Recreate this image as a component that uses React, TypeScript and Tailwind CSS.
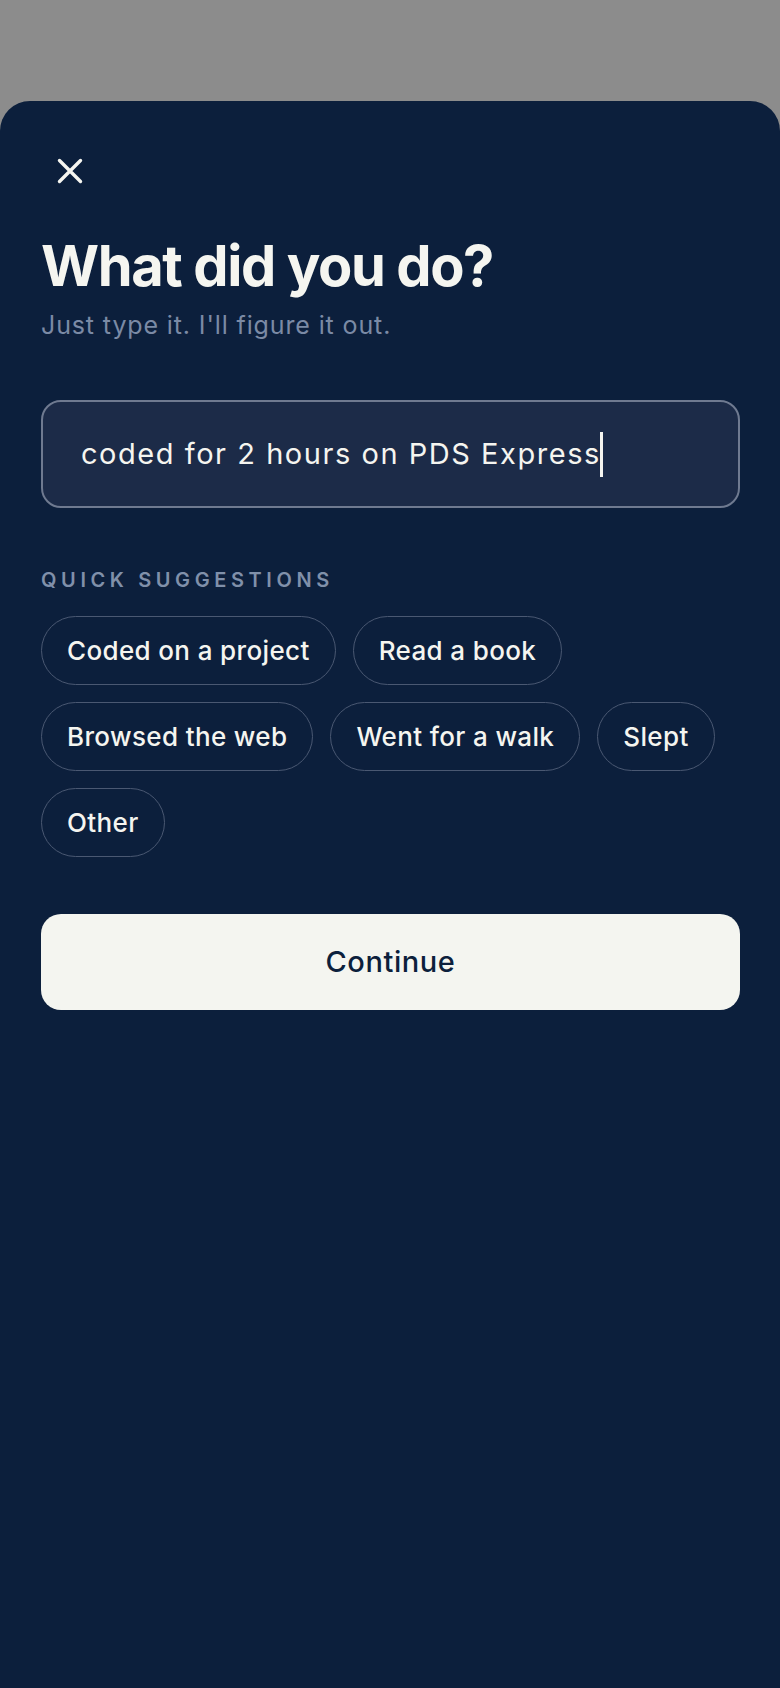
const suggestions = [
  "Coded on a project",
  "Read a book",
  "Browsed the web",
  "Went for a walk",
  "Slept",
  "Other",
];

const CloseIcon = () => (
  <svg width="26" height="26" viewBox="0 0 26 26" fill="none">
    <path
      d="M2.5 2.5L23.5 23.5M23.5 2.5L2.5 23.5"
      stroke="#f5f5f0"
      strokeWidth="3.4"
      strokeLinecap="round"
    />
  </svg>
);

const App = () => {
  return (
    <div className="flex min-h-[1688px] w-full flex-col bg-[#8c8c8c] pt-[101px] font-['Inter',sans-serif]">
      <div className="flex flex-1 flex-col rounded-t-[30px] bg-[#0c1f3c] pl-[41px] pr-[40px]">
        {/* close */}
        <button className="mt-[57px] ml-[16px] flex h-[26px] w-[26px] items-center justify-center">
          <CloseIcon />
        </button>

        <h1 className="mt-[54px] text-[56px] leading-[56px] font-bold tracking-[-0.025em] text-[#f5f5f0]">
          What did you do?
        </h1>
        <p className="mt-[15px] text-[25px] leading-[32px] tracking-[0.035em] text-[#7b8aa5]">
          Just type it. I'll figure it out.
        </p>

        {/* input */}
        <div className="mt-[59px] flex h-[108px] items-center rounded-[20px] border-2 border-[#6f7a90] bg-[#1c2b48] pl-[38px]">
          <span className="text-[29px] leading-[36px] tracking-[0.053em] text-[#f5f5f0]">
            coded for 2 hours on PDS Express
          </span>
          <span className="-ml-[1px] h-[45px] w-[3px] bg-[#f5f5f0]" />
        </div>

        <div className="mt-[58px] text-[20px] leading-[28px] font-semibold tracking-[0.23em] text-[#8090aa]">
          QUICK SUGGESTIONS
        </div>

        <div className="mt-[22px] flex flex-wrap gap-[17px]">
          {suggestions.map((s) => (
            <button
              key={s}
              className="flex h-[69px] items-center rounded-full border-[1.5px] border-[#4a5872] px-[25px] text-[26px] font-medium tracking-[0.014em] text-[#f5f5f0]"
            >
              {s}
            </button>
          ))}
        </div>

        <button className="mt-[57px] flex h-[96px] w-full items-center justify-center rounded-[20px] bg-[#f4f5f0] text-[29px] font-medium tracking-[0.02em] text-[#0c1f3c]">
          Continue
        </button>
      </div>
    </div>
  );
};

export default App;
